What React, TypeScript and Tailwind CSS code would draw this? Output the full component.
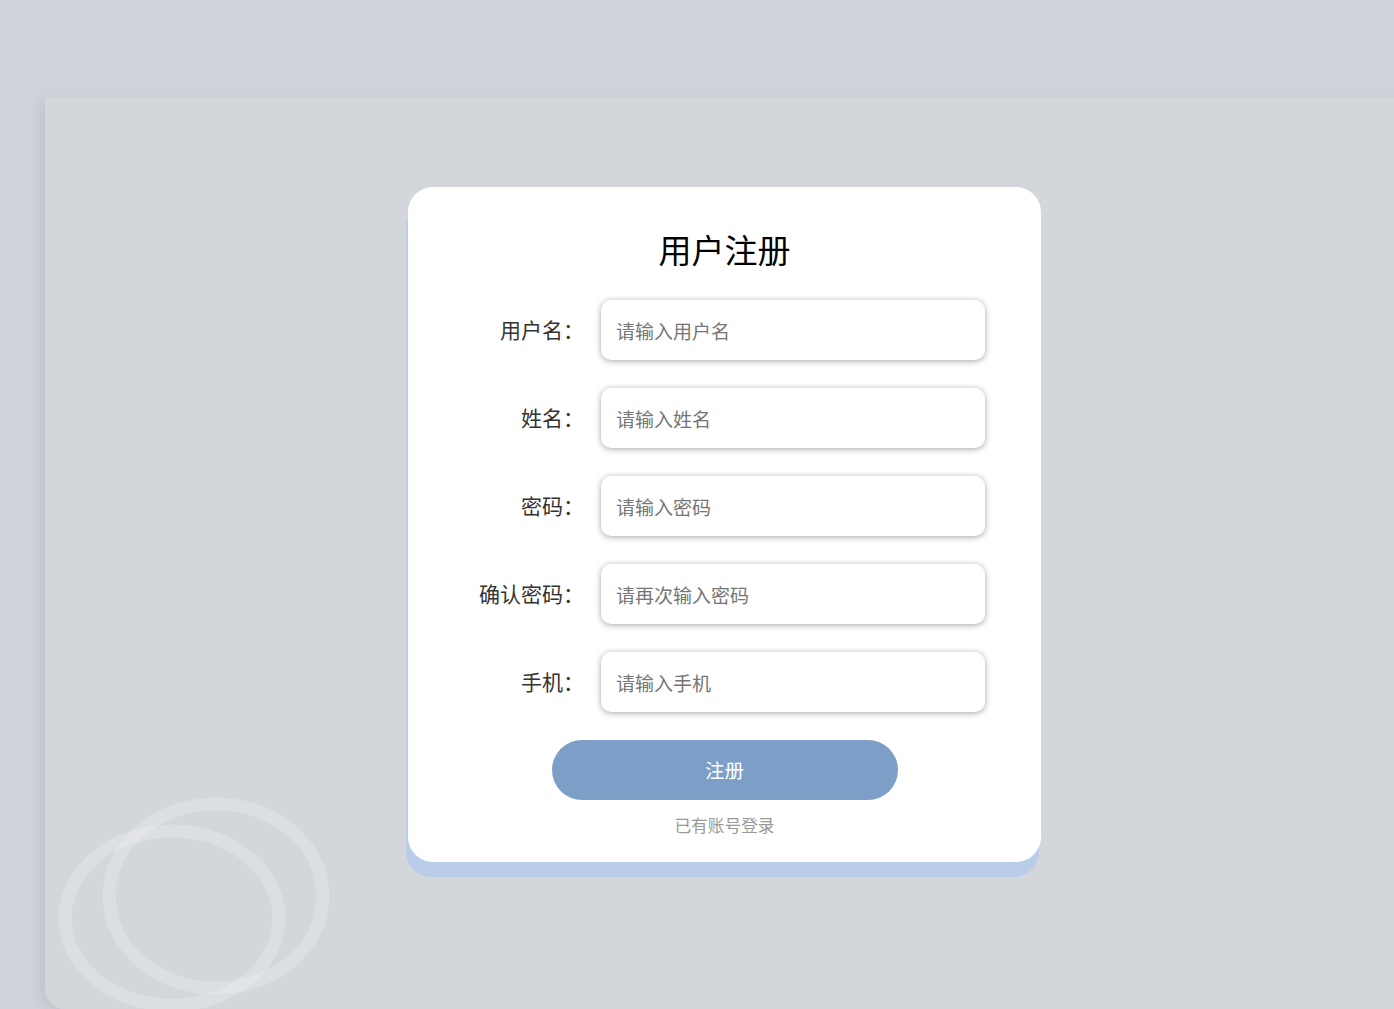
import React from "react";

const fields = [
  { label: "用户名：", placeholder: "请输入用户名", type: "text" },
  { label: "姓名：", placeholder: "请输入姓名", type: "text" },
  { label: "密码：", placeholder: "请输入密码", type: "password" },
  { label: "确认密码：", placeholder: "请再次输入密码", type: "password" },
  { label: "手机：", placeholder: "请输入手机", type: "text" },
];

export default function App() {
  return (
    <div
      className="w-full h-[1009px] overflow-hidden bg-[#cfd2d8] pt-[98px]"
      style={{ fontFamily: '"Noto Sans CJK SC", "Noto Sans", sans-serif' }}
    >
      <div className="relative ml-[45px] w-[1359px] h-[911px] rounded-bl-[20px] bg-[#d3d6db] shadow-[-6px_2px_10px_rgba(0,0,0,0.06)] overflow-hidden flex justify-center pt-[89px]">
        <svg
          className="absolute left-0 top-0 pointer-events-none"
          width="400"
          height="911"
          viewBox="0 0 400 911"
        >
          <ellipse cx="171" cy="798" rx="107" ry="92" fill="none" stroke="rgba(255,255,255,0.2)" strokeWidth="13" />
          <ellipse cx="127" cy="820" rx="107" ry="87" fill="none" stroke="rgba(255,255,255,0.2)" strokeWidth="13" />
        </svg>
        <div className="relative w-[633px] h-[675px] rounded-[25px] bg-white shadow-[-2px_15px_0_#b9cde8] flex flex-col items-center pt-[37px]">
          <h1 className="text-[33px] leading-[50px] text-black font-normal">用户注册</h1>
          <div className="mt-[26px] w-full flex flex-col gap-[28px]">
            {fields.map((f) => (
              <div key={f.label} className="flex items-center">
                <label className="w-[176px] text-right text-[21px] text-[#333] whitespace-nowrap">{f.label}</label>
                <input
                  type={f.type}
                  placeholder={f.placeholder}
                  className="ml-[17px] w-[384px] h-[60px] rounded-[10px] bg-white px-[15px] text-[19px] text-[#333] placeholder:text-[#757575] outline-none shadow-[0_1px_6px_rgba(0,0,0,0.36)]"
                />
              </div>
            ))}
          </div>
          <button className="mt-[28px] w-[346px] h-[60px] rounded-full bg-[#7d9fc7] text-white text-[19.5px]">
            注册
          </button>
          <a className="mt-[13px] text-[16.7px] leading-[24px] text-[#999] cursor-pointer">已有账号登录</a>
        </div>
      </div>
    </div>
  );
}
